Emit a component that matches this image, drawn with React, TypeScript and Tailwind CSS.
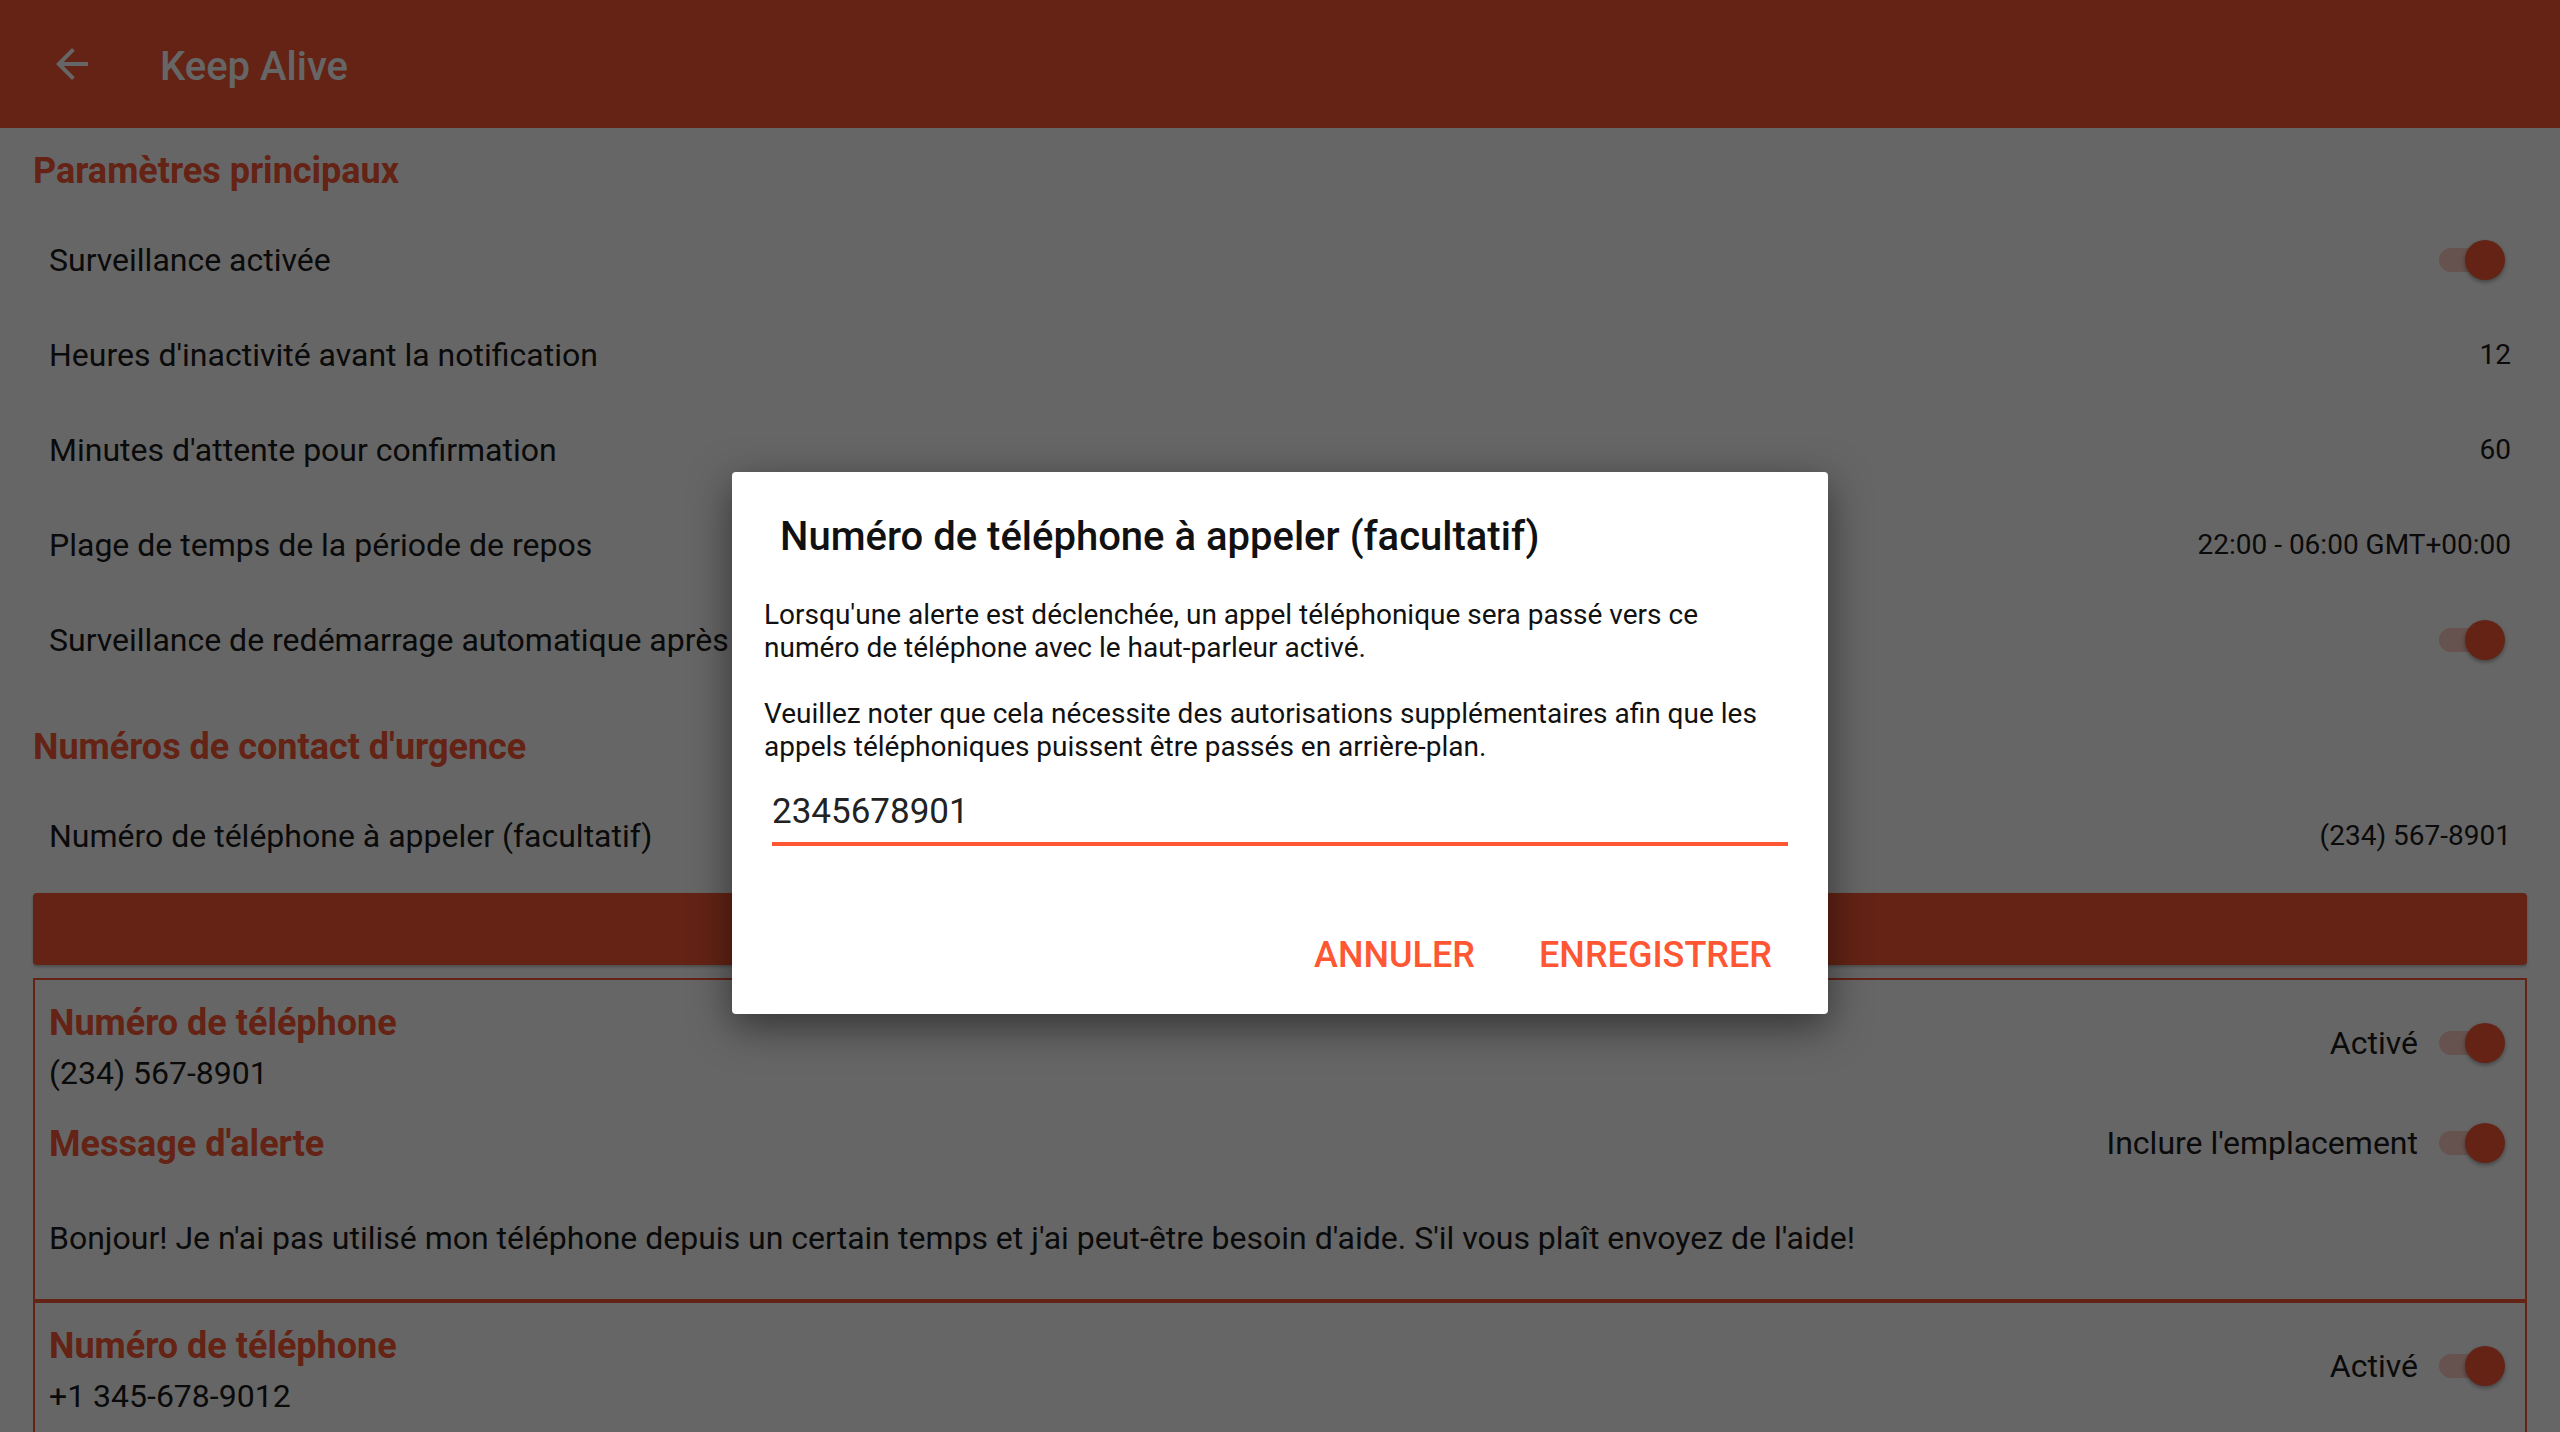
import React from 'react';

const FONT = "font-['Roboto','Liberation_Sans',sans-serif]";

function Switch() {
  return (
    <div className="relative h-[40px] w-[72px] shrink-0">
      <div className="absolute left-0 top-[8px] h-[24px] w-[60px] rounded-full bg-[#FF5733]/30" />
      <div className="absolute left-[26px] top-0 h-[40px] w-[40px] rounded-full bg-[#F95735] shadow-[0_2px_4px_rgba(0,0,0,0.35)]" />
    </div>
  );
}

function SectionTitle({ children, className = '' }: { children: React.ReactNode; className?: string }) {
  return (
    <div className={`flex h-[84px] items-center pt-[2px] text-[36px] font-bold text-[#F95735] ${className}`}>
      {children}
    </div>
  );
}

function Row({ label, value, toggle }: { label: string; value?: string; toggle?: boolean }) {
  return (
    <div className="flex h-[95px] items-center justify-between px-[16px]">
      <span className="whitespace-nowrap text-[32px] text-[#1a1a1a]">{label}</span>
      {value && <span className="whitespace-nowrap text-[28px] text-[#1a1a1a]">{value}</span>}
      {toggle && <Switch />}
    </div>
  );
}

function ContactCard({ phone, message }: { phone: string; message: string }) {
  return (
    <div className="border-2 border-[#F95735] pb-[37px] pl-[14px] pr-[14px]">
      <div className="flex items-start justify-between">
        <div className="pt-[19px]">
          <div className="text-[36px] font-bold leading-[48px] text-[#F95735]">Numéro de téléphone</div>
          <div className="mt-[4px] text-[32px] leading-[44px] text-[#1a1a1a]">{phone}</div>
        </div>
        <div className="mt-[39px] flex h-[48px] items-center gap-[21px]">
          <span className="text-[32px] text-[#1a1a1a]">Activé</span>
          <Switch />
        </div>
      </div>
      <div className="mt-[24px] flex h-[48px] items-center justify-between">
        <span className="pt-[2px] text-[36px] font-bold text-[#F95735]">Message d'alerte</span>
        <div className="flex items-center gap-[21px]">
          <span className="text-[32px] text-[#1a1a1a]">Inclure l'emplacement</span>
          <Switch />
        </div>
      </div>
      <div className="mt-[47px] text-[32px] leading-[48px] text-[#1a1a1a]">{message}</div>
    </div>
  );
}

export default function App() {
  const message =
    "Bonjour! Je n'ai pas utilisé mon téléphone depuis un certain temps et j'ai peut-être besoin d'aide. S'il vous plaît envoyez de l'aide!";

  return (
    <div className={`relative h-[1432px] w-[2560px] overflow-hidden bg-white ${FONT}`}>
      {/* Toolbar */}
      <div className="flex h-[128px] items-center bg-[#F95735] pl-[48px]">
        <svg viewBox="0 0 24 24" className="h-[48px] w-[48px] fill-white">
          <path d="M20 11H7.83l5.59-5.59L12 4l-8 8 8 8 1.41-1.41L7.83 13H20v-2z" />
        </svg>
        <span className="ml-[64px] pt-[6px] text-[40px] font-medium text-white">Keep Alive</span>
      </div>

      {/* Settings list */}
      <div className="px-[33px]">
        <SectionTitle>Paramètres principaux</SectionTitle>
        <Row label="Surveillance activée" toggle />
        <Row label="Heures d'inactivité avant la notification" value="12" />
        <Row label="Minutes d'attente pour confirmation" value="60" />
        <Row label="Plage de temps de la période de repos" value="22:00 - 06:00 GMT+00:00" />
        <Row label="Surveillance de redémarrage automatique après redémarrage" toggle />

        <SectionTitle className="mt-[17px]">Numéros de contact d'urgence</SectionTitle>
        <Row label="Numéro de téléphone à appeler (facultatif)" value="(234) 567-8901" />

        <div className="mt-[10px] h-[72px] rounded-[4px] bg-[#F95735] shadow-[0_2px_3px_rgba(0,0,0,0.25)]" />

        <div className="mt-[13px]">
          <ContactCard phone="(234) 567-8901" message={message} />
          <ContactCard phone="+1 345-678-9012" message={message} />
        </div>
      </div>

      {/* Scrim */}
      <div className="absolute inset-0 bg-black/60" />

      {/* Dialog */}
      <div className="absolute left-[732px] top-[472px] h-[542px] w-[1096px] rounded-[4px] bg-white shadow-[0_12px_40px_rgba(0,0,0,0.5)]">
        <div className="pl-[48px] pt-[41px] text-[40px] font-medium leading-[48px] text-[#111]">
          Numéro de téléphone à appeler (facultatif)
        </div>
        <div className="mt-[37px] whitespace-nowrap px-[32px] text-[28px] leading-[33px] text-[#111]">
          Lorsqu'une alerte est déclenchée, un appel téléphonique sera passé vers ce
          <br />
          numéro de téléphone avec le haut-parleur activé.
          <br />
          <br />
          Veuillez noter que cela nécessite des autorisations supplémentaires afin que les
          <br />
          appels téléphoniques puissent être passés en arrière-plan.
        </div>
        <div className="mx-[40px] mt-[25px]">
          <div className="h-[48px] text-[35px] leading-[48px] text-[#222]">2345678901</div>
          <div className="mt-[6px] h-[4px] bg-[#FF5733]" />
        </div>
        <div className="mt-[85px] flex justify-end gap-[32px] pr-[40px]">
          <button className="px-[16px] text-[36px] font-medium leading-[48px] text-[#FF5733]">ANNULER</button>
          <button className="px-[16px] text-[36px] font-medium leading-[48px] text-[#FF5733]">ENREGISTRER</button>
        </div>
      </div>
    </div>
  );
}
